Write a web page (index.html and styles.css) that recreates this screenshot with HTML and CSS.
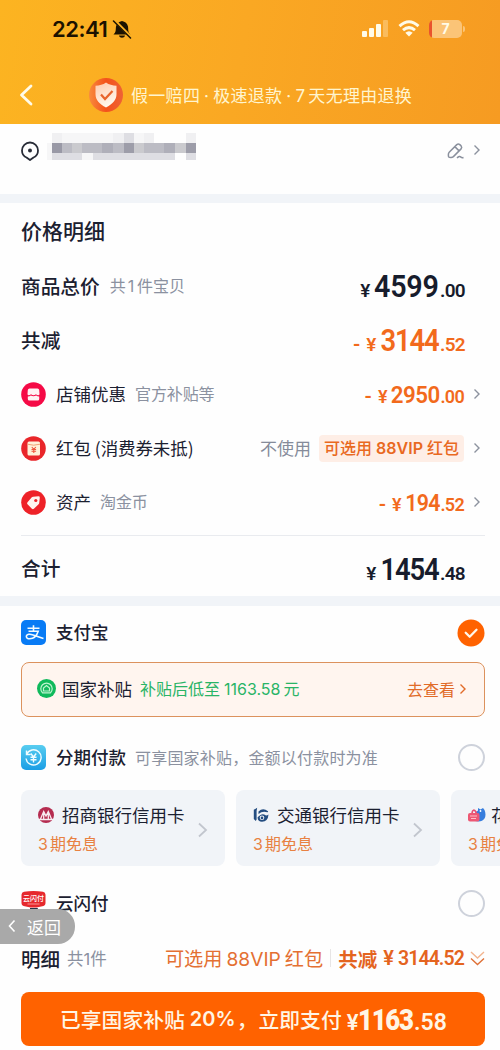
FILE: index.html
```html
<!DOCTYPE html>
<html lang="zh-CN">
<head>
<meta charset="utf-8">
<title>价格明细</title>
<link rel="stylesheet" href="styles.css">
</head>
<body>
<div class="screen">
  <header class="header">
    <div class="status">
      <span class="clock">22:41</span>
      <svg class="bell" width="20" height="20" viewBox="0 0 20 20"><path d="M1.500 15.500c2.800-2.500 2-4.500 2.500-8C4.500 4.500 7 2.500 10 2c3 .5 5.500 2.500 6 5.500.5 3.500-.3 5.500 2.500 8zM7 16.500h6c-.5 3-5.500 3-6 0z" fill="#1c1200"/><path d="M2 1l17 17" stroke="#fbb022" stroke-width="3"/><path d="M1.500 2l17 17" stroke="#1c1200" stroke-width="1.500" stroke-linecap="round"/></svg>
      <svg class="signal" width="27" height="17" viewBox="0 0 27 17" fill="#fffbe8"><rect x="0" y="11" width="5" height="6" rx="1"/><rect x="7" y="8" width="5" height="9" rx="1"/><rect x="14" y="4" width="5" height="13" rx="1"/><rect x="21" y="0" width="5" height="17" rx="1" opacity=".3"/></svg>
      <svg class="wifi" width="22" height="17" viewBox="0 0 22 17" fill="none" stroke="#fffbe8" stroke-width="3"><path d="M1.500 6.200Q11-2.600 20.500 6.200M5 10.200q6-5.200 12 0"/><path d="M7.300 12.800q3.700-3 7.400 0L11 16.500z" fill="#fffbe8" stroke="none"/></svg>
      <div class="battery"><span>7</span></div>
      <i class="battery-tip"></i>
    </div>
    <div class="nav">
      <svg class="back" width="14" height="22" viewBox="0 0 14 22"><path d="M12 2L2.500 11 12 20" fill="none" stroke="#fffbe8" stroke-width="2.800" stroke-linecap="round" stroke-linejoin="round"/></svg>
      <svg class="shield" width="36" height="36" viewBox="0 0 36 36"><defs><linearGradient id="sg" x1="0" y1="0" x2=".4" y2="1"><stop offset="0" stop-color="#ffc9ab"/><stop offset="1" stop-color="#fff7ec"/></linearGradient><linearGradient id="cg" x1="0" x2="1"><stop offset="0" stop-color="#f98b3d"/><stop offset=".5" stop-color="#f4521a"/><stop offset="1" stop-color="#ee6335"/></linearGradient></defs><circle cx="18" cy="18" r="17" fill="url(#cg)"/><path d="M18 5.500c3 2.200 6.500 3 10.500 3.300V17c0 6-4 10-10.500 13.500C11.500 27 7.500 23 7.500 17V8.800C11.500 8.500 15 7.700 18 5.500z" fill="url(#sg)"/><path d="M13 17.500l4 4.500 7.500-8" fill="none" stroke="#e8642c" stroke-width="2.200"/></svg>
      <span class="promise">假一赔四<span class="dot">·</span>极速退款<span class="dot">·</span><span class="inter seven">7</span>天无理由退换</span>
    </div>
  </header>

  <section class="address">
    <svg width="20" height="22" viewBox="0 0 20 22"><path d="M6.500 17.500C3.500 16.200 2 13.500 2 10.500a8 8 0 0 1 16 0c0 3-1.500 5.700-4.500 7L10 20z" fill="none" stroke="#282c37" stroke-width="1.800" stroke-linejoin="round"/><circle cx="10" cy="10.500" r="2" fill="#282c37"/></svg>
    <svg class="mosaic" width="150" height="30" viewBox="0 0 150 30" shape-rendering="crispEdges"><path fill="#f0f0f2" d="M5 1h10v10H5zM66 1h11v10H66zM97 1h10v10H97zM139 1h10v10h-10z"/><path fill="#dedee3" d="M77 1h11v10H77zM5 21h30v7H5zM46 21h82v7H46zM139 21h10v7h-10z"/><path fill="#f6f6f7" d="M15 1h51v10H15zM87 1h10v10H87zM0 11h5v17H0zM35 21h11v7H35zM128 11h11v10h-11z"/><path fill="#9999a6" d="M5 11h10v10H5z"/><path fill="#bcbcc4" d="M15 11h10v10H15zM35 11h20v10H35zM66 11h11v10H66zM97 11h20v10H97z"/><path fill="#cacace" d="M25 11h10v10H25zM87 11h10v10H87zM128 11h11v10h-11z"/><path fill="#afafb9" d="M55 11h11v10H55zM117 11h11v10h-11z"/><path fill="#9d9da9" d="M77 11h10v10H77zM139 11h10v10h-10z"/></svg>
    <svg class="edit" width="18" height="18" viewBox="0 0 18 18" fill="none" stroke="#8a909d" stroke-width="1.500" stroke-linejoin="round"><path d="M2.200 10.200l7.600-7.600q1.500-1.200 3 0l1.300 1.300q1.200 1.500 0 3l-7.700 7.700q-1.200 1-2.600.9l-1.500-.2q-.9-.3-.9-1.400v-1.700q0-1.200.8-2zM7.800 4.600l4.300 4.300M10 16q2.500-2.500 4-.8 1 .8 2.500.3"/></svg>
    <svg class="chev" width="8" height="12" viewBox="0 0 8 12"><path d="M1.500 1.500L6 6l-4.500 4.500"/></svg>
  </section>

  <section class="details">
    <h1 class="title">价格明细</h1>
    <div class="row"><b class="label">商品总价</b><span class="note items">共<span class="inter one">1</span>件宝贝</span><span class="price big dark"><i>¥</i><b>4599</b><em>.00</em></span></div>
    <div class="row"><b class="label">共减</b><span class="price big ones"><u>-</u><i>¥</i><b>3144</b><em>.52</em></span></div>
    <div class="row">
      <svg class="icon" width="25" height="25" viewBox="0 0 25 25"><circle cx="12.500" cy="12.500" r="12.300" fill="#f50a46"/><path d="M8.500 6.500h8q1.500 0 1.700 1.500l.3 4q0 1.300-1.300 1.300-1.300 0-2.200-1-2.500 1.700-5 0-1 1-2.200 1-1.300 0-1.300-1.300l.3-4Q7 6.500 8.500 6.500zM6.800 14.500q2 0 3-1 2.700 1.500 5.400 0 1 1 3 1V17q0 1.500-1.500 1.500H8.300Q6.800 18.500 6.800 17z" fill="#fff2f4"/></svg>
      <span class="name">店铺优惠</span><span class="note">官方补贴等</span><span class="price"><u>-</u><i>¥</i><b>2950</b><em>.00</em></span><svg class="chev" width="8" height="12" viewBox="0 0 8 12"><path d="M1.500 1.500L6 6l-4.500 4.500"/></svg>
    </div>
    <div class="row">
      <svg class="icon" width="25" height="25" viewBox="0 0 25 25"><circle cx="12.500" cy="12.500" r="12.300" fill="#e9262a"/><rect x="6.500" y="5.500" width="12.500" height="14" rx="1.500" fill="#fff1d8"/><path d="M6.500 8.200q6 2 12.500 0" fill="none" stroke="#f1a173"/><path d="M10.800 11l2 2.300 2-2.300M10.500 13.500h4.600M10.500 15.300h4.600M12.800 13v4" stroke="#ef563c" fill="none" stroke-width="1.100"/></svg>
      <span class="name wide">红包<span class="paren">(消费券未抵)</span></span><span class="unused">不使用</span><span class="tag">可选用<span class="inter vip">88VIP</span>红包</span><svg class="chev" width="8" height="12" viewBox="0 0 8 12"><path d="M1.500 1.500L6 6l-4.500 4.500"/></svg>
    </div>
    <div class="row">
      <svg class="icon" width="25" height="25" viewBox="0 0 25 25"><circle cx="12.500" cy="12.500" r="12.300" fill="#ee2228"/><path d="M12 6.800l5.500-.5q1.400 0 1.300 1.400l-.6 5.300q-.1.700-.6 1.200l-4.700 4.600q-1 .9-2 0l-4.400-4.600q-.9-1 0-1.900l4.300-5q.5-.5 1.200-.5z" fill="#fff5ef"/><circle cx="14.800" cy="10.500" r="1.600" fill="#ee2228"/></svg>
      <span class="name">资产</span><span class="note">淘金币</span><span class="price small-ones"><u>-</u><i>¥</i><b>194</b><em>.52</em></span><svg class="chev" width="8" height="12" viewBox="0 0 8 12"><path d="M1.500 1.500L6 6l-4.500 4.500"/></svg>
    </div>
    <div class="row total"><b class="label">合计</b><span class="price big dark ones"><i>¥</i><b>1454</b><em>.48</em></span></div>
  </section>

  <section class="payments">
    <div class="pay-row first">
      <svg class="icon" width="25" height="25" viewBox="0 0 25 25"><rect width="25" height="25" rx="5" fill="#087bf5"/><path d="M6.500 8.300h12M12.500 5.300v5.500M7.500 11.300h9.700c-1.200 3.800-4.300 7.500-8.500 7.500-4.700 0-4.200-5-.2-4.500 4.300.5 8.300 2.500 14 4.300" fill="none" stroke="#f3fbff" stroke-width="1.600"/></svg>
      <span class="name mid">支付宝</span>
      <svg class="radio" width="28" height="28" viewBox="0 0 28 28"><circle cx="14" cy="14" r="13.500" fill="#ff6200"/><path d="M8.700 13.800l4 4 6.800-7" fill="none" stroke="#fff7eb" stroke-width="2.300" stroke-linecap="round" stroke-linejoin="round"/></svg>
    </div>
    <div class="subsidy">
      <svg width="19" height="19" viewBox="0 0 19 19"><circle cx="9.500" cy="9.500" r="9.500" fill="#0fb95b"/><path d="M5.500 13.800a5.700 5.700 0 1 1 8 0zM6.500 12V9l3-2.500 3 2.500v3z" fill="none" stroke="#bdf3cf" stroke-width="1.200"/></svg>
      <span class="sub-name">国家补贴</span><span class="green">补贴后低至<span class="inter num">1163.58</span>元</span><span class="look">去查看</span>
      <svg class="chev hot" width="8" height="12" viewBox="0 0 8 12"><path d="M1.500 1.500L6 6l-4.500 4.500"/></svg>
    </div>
    <div class="pay-row">
      <svg class="icon" width="25" height="25" viewBox="0 0 25 25"><defs><linearGradient id="ig" x2="0" y2="1"><stop stop-color="#58cdf0"/><stop offset="1" stop-color="#1b9ee5"/></linearGradient></defs><rect width="25" height="25" rx="5" fill="url(#ig)"/><path d="M5.500 9.500a7.600 7.600 0 1 1-.5 4M5.500 5.500v4h4M9.800 8.500l2.700 3.500 2.700-3.500M9.500 12.200h6M9.500 14.800h6M12.500 12v5.500" fill="none" stroke="#effcff" stroke-width="1.400"/></svg>
      <span class="name mid">分期付款</span><span class="note long">可享国家补贴，金额以付款时为准</span><i class="radio ring"></i>
    </div>
    <div class="cards">
      <div class="card"><div><p class="bank"><svg width="16" height="16" viewBox="0 0 16 16"><circle cx="8" cy="8" r="8" fill="#b52c50"/><path d="M2.500 12L5.700 4.500 8 9l2.300-4.500 3.200 7.500M5.700 6v6M10.300 6v6M1 12.500h14" fill="none" stroke="#f8eaf0" stroke-width="1.300"/></svg>招商银行信用卡</p><p class="free"><span class="inter">3</span>期免息</p></div><svg class="chev large" width="11" height="16" viewBox="0 0 11 16"><path d="M2 1.500L9 8l-7 6.500"/></svg></div>
      <div class="card"><div><p class="bank"><svg width="16" height="16" viewBox="0 0 16 16"><path d="M.8 2.800L4.200.8 3.600 4v8.500L2.800 14 .8 12z" fill="#244d80"/><path d="M5.500 4.500q4.500-4.500 9.500-.2.500.9-.6 1Q9.500 3.600 5.500 7z" fill="#244d80"/><path d="M4.500 10.500q.5 4.300 4.500 4.300 6-.3 6.500-7.300-1.500 1.200-3 .8-2.500-1.800-5-.3-2 1-3 2.500z" fill="#244d80"/><circle cx="9" cy="10.700" r="2.300" fill="#f1f4f8"/><circle cx="9" cy="10.900" r="1.300" fill="#244d80"/></svg>交通银行信用卡</p><p class="free"><span class="inter">3</span>期免息</p></div><svg class="chev large" width="11" height="16" viewBox="0 0 11 16"><path d="M2 1.500L9 8l-7 6.500"/></svg></div>
      <div class="card"><div><p class="bank"><svg class="hb" width="18" height="16" viewBox="0 0 18 16"><path d="M8 5l2-1.500V1l2.500 1.500L15 1l1.500 2q2 4.500 0 8.500-2 3-6 3L7 14z" fill="#367ddd"/><path d="M4 6q1-5 4-1v2" fill="none" stroke="#e65072" stroke-width="1.800"/><rect y="6" width="11.500" height="8.500" rx="2" fill="#ed5874"/><path d="M2 9h7M3 11.500h5" stroke="#ffc0c5"/><circle cx="12.500" cy="4" r=".9" fill="#fff"/></svg>花呗</p><p class="free"><span class="inter">3</span>期免息</p></div></div>
    </div>
    <div class="pay-row cloud">
      <svg class="icon" width="25" height="26" viewBox="0 0 25 26"><path d="M9 17h8l-3 8H9z" fill="#263548"/><path d="M3 .8q9.500-1.500 19 0 2.500.4 2.500 3v8.500q0 2.200-2 2.700l-7 1.500h-6l-7-1.500q-2-.5-2-2.700V3.800q0-2.600 2.500-3z" fill="#e6282d"/><text class="tiny" x="2" y="10">云闪付</text><path d="M6.500 13h12" stroke="#ffb1ae" stroke-width=".8"/></svg>
      <span class="name mid">云闪付</span><i class="radio ring"></i>
      <div class="return"><svg width="8" height="14" viewBox="0 0 8 14"><path d="M6.500 1.500L1.500 7l5 5.500" fill="none" stroke="#fff" stroke-width="1.600"/></svg>返回</div>
    </div>
  </section>

  <footer>
    <div class="summary"><b class="det">明细</b><span class="count">共<span class="inter">1</span>件</span><span class="option">可选用<span class="inter">88VIP</span>红包</span><i class="sep"></i><b class="saved">共减</b><span class="yen">¥</span><b class="amount">3144.52</b><svg width="15" height="15" viewBox="0 0 15 15" fill="none" stroke-width="1.400"><path d="M1 1l6.500 6L14 1" stroke="#f2b590"/><path d="M1 7.500l6.500 6 6.500-6" stroke="#df7137"/></svg></div>
    <button class="submit"><span class="cta">已享国家补贴</span><span class="pct">20%</span><span class="cta comma">，</span><span class="cta now">立即支付</span><span class="sum"><i>¥</i><b>1163</b><em>.58</em></span></button>
  </footer>
</div>
</body>
</html>
```
FILE: styles.css
```css
* { box-sizing: border-box; }
body { margin: 0; background: #fefefe; font-family: "Noto Sans CJK SC", sans-serif; color: #1b2030; }
i, em, u { font-style: normal; text-decoration: none; }
p, h1 { margin: 0; }
svg { display: block; flex: none; }
.inter { font-family: Inter, sans-serif; }
.screen { width: 500px; height: 1050px; overflow: hidden; display: flex; flex-direction: column; white-space: nowrap; }

.header { height: 124px; flex: none; background: linear-gradient(100deg, #fcb421 0%, #faa823 48%, #f69b22 100%); }
.status { height: 56px; display: flex; align-items: center; padding: 1px 35px 0 52px; }
.clock { font: 600 22px/28px Inter, sans-serif; letter-spacing: -0.5px; color: #1c1200; width: 60px; }
.bell { margin-top: 1px; }
.signal { margin-left: auto; margin-right: 9px; }
.wifi { margin-right: 9px; }
.battery { width: 33px; height: 18px; border-radius: 5px; background: linear-gradient(90deg, #e9532d 0 3px, #fbc477 3px); color: #fffbe8; font: 700 14px/18px Inter, sans-serif; text-align: center; }
.battery-tip { width: 2px; height: 6px; margin-left: 1px; border-radius: 0 2px 2px 0; background: #fbc477; }
.nav { height: 68px; display: flex; align-items: center; padding: 10px 0 0 19px; }
.shield { margin-left: 55px; }
.promise { margin-left: 7px; padding-bottom: 1px; font-size: 17px; letter-spacing: 0.3px; color: #fff5cf; }
.dot { display: inline-block; width: 13px; text-align: center; font-family: Inter, sans-serif; }
.seven { margin-right: 3px; }

.address { height: 70px; flex: none; display: flex; align-items: flex-start; padding: 16px 19px 0 20px; }
.mosaic { margin: -8px 0 0 7px; }
.edit { margin: 2px 8px 0 auto; }
.address .chev { margin-top: 4px; }
.chev { fill: none; stroke: #8c929e; stroke-width: 1.4; }

.details { height: 412px; flex: none; border: solid #f1f4f8; border-width: 9px 0 10px; padding: 2px 19px 0 21px; }
.title { height: 54px; font: 500 21px/51px "Noto Sans CJK SC", sans-serif; }
.row { height: 54px; display: flex; align-items: center; }
.label { font-weight: 500; font-size: 19.7px; padding-bottom: 2px; }
.note { font-size: 16px; color: #8b91a0; margin-left: 9px; padding-bottom: 2px; letter-spacing: -0.1px; }
.items { margin-left: 10px; }
.one { margin: 0 3px 0 2px; }
.icon { margin-right: 10px; }
.name { font-size: 17.5px; padding-bottom: 2px; }
.wide { letter-spacing: -0.1px; }
.paren { margin-left: 4px; }
.price { margin-left: auto; margin-right: 9px; color: #f26a1c; font-family: Roboto, sans-serif; display: flex; align-items: baseline; font-weight: 600; padding-top: 2px; }
.price i { font-size: 18px; margin-right: 3px; }
.price b { font-size: 24px; font-weight: 600; letter-spacing: -0.5px; transform: scaleX(0.93); transform-origin: right; margin-left: -4px; }
.price em { font-size: 18px; letter-spacing: -0.7px; margin-left: 1px; }
.price u { margin-right: 6px; font-size: 20px; }
.price.big { margin-right: 16px; padding-top: 1px; }
.price.big b { font-size: 30.5px; letter-spacing: -0.3px; transform: scaleX(0.94); }
.price.big i { margin-right: 4px; font-size: 19px; }
.price.big em { font-size: 19px; }
.price.big.ones b { letter-spacing: -1.3px; transform: scaleX(0.9); margin-left: -6px; }
.price.small-ones b { letter-spacing: -0.8px; transform: scaleX(0.89); }
.price.dark { color: #171c2c; }
.unused { margin-left: auto; font-size: 17px; color: #858b9a; padding-bottom: 2px; }
.tag { height: 27px; margin: 0 9px 0 8px; padding: 0 5px; border-radius: 4px; background: #feeee6; color: #e9691f; font-weight: 500; font-size: 16px; line-height: 25px; }
.tag .vip { margin: 0 4px; font-weight: 600; }
.total { height: 61px; border-top: 1px solid #e9ebef; margin: 6px -4px 0 0; padding: 5px 4px 0 0; }

.payments { flex: none; height: 329px; padding: 0 15px 0 21px; }
.pay-row { height: 73px; display: flex; align-items: center; padding-top: 8px; position: relative; }
.pay-row.first { height: 56px; padding: 0 0 3px; }
.mid { font-weight: 500; }
.radio { margin-left: auto; }
.ring { width: 27px; height: 27px; border: 2px solid #ced2db; border-radius: 50%; }
.subsidy { height: 55px; display: flex; align-items: center; padding: 0 17px 2px 15px; border: 1.5px solid #dc925d; border-radius: 8px; background: #fff5ef; }
.sub-name { font-size: 17.5px; margin: 0 8px 0 6px; }
.green { font-size: 16px; color: #29b466; padding-bottom: 1px; }
.green .num { margin: 0 3px 0 4px; }
.look { margin-left: auto; margin-right: 4px; font-size: 16px; color: #e16b28; }
.hot { stroke: #e16b28; }
.long { letter-spacing: 0.2px; }
.cards { display: flex; gap: 11px; margin-right: -15px; overflow: hidden; }
.card { width: 204px; height: 76px; flex: none; background: #f1f4f8; border-radius: 8px; display: flex; align-items: center; padding: 3px 17px 0; justify-content: space-between; }
.bank { display: flex; align-items: center; gap: 8px; font-size: 17.5px; line-height: 28px; }
.hb { margin-right: -3px; }
.free { font-size: 16px; line-height: 29px; color: #e88142; }
.free .inter { margin-right: 2px; }
.large { stroke: #c2c6ce; stroke-width: 1.8; }
.tiny { font: 500 7px "Noto Sans CJK SC", sans-serif; fill: #fff; }
.cloud { height: 69px; padding-top: 6px; }
.return { position: absolute; left: -21px; top: 43px; width: 75px; height: 35px; border-radius: 0 17px 17px 0; background: #a9a9a9; color: #fff; font-size: 17px; display: flex; align-items: center; padding: 0 0 1px 8px; gap: 11px; }

footer { padding: 0 15px 0 21px; }
.summary { height: 57px; display: flex; align-items: center; padding-bottom: 11px; }
.det { font-weight: 500; font-size: 19.5px; }
.count { margin-left: 7px; font-size: 16.5px; color: #8b91a0; }
.option { margin-left: auto; font-size: 19.2px; color: #e47032; }
.option .inter { margin: 0 4px; }
.sep { width: 1px; height: 18px; margin: 0 7px; background: #e7e5e5; }
.saved { font-weight: 600; font-size: 19.5px; color: #e4641f; }
.yen { margin: 0 4px 0 6px; font: 600 20px Roboto, sans-serif; color: #e4641f; }
.amount { font: 600 19.5px Roboto, sans-serif; letter-spacing: -0.9px; color: #e4641f; margin-right: 6px; }
.submit { width: 464px; height: 54px; border: 0; border-radius: 8px; background: #ff6200; color: #fff5e4; display: flex; align-items: center; padding: 0 0 0 39px; }
.cta { font: 500 20.8px/30px "Noto Sans CJK SC", sans-serif; }
.pct { font: 600 20px/30px Inter, sans-serif; margin-left: 5px; }
.comma { width: 23px; }
.sum { display: flex; align-items: baseline; font-family: Roboto, sans-serif; font-weight: 600; margin-left: 5px; }
.sum i { font-size: 22px; }
.sum b { font-size: 30px; letter-spacing: -1.5px; transform: scaleX(0.86); transform-origin: left; margin-right: -8px; }
.sum em { font-size: 23px; }
```
